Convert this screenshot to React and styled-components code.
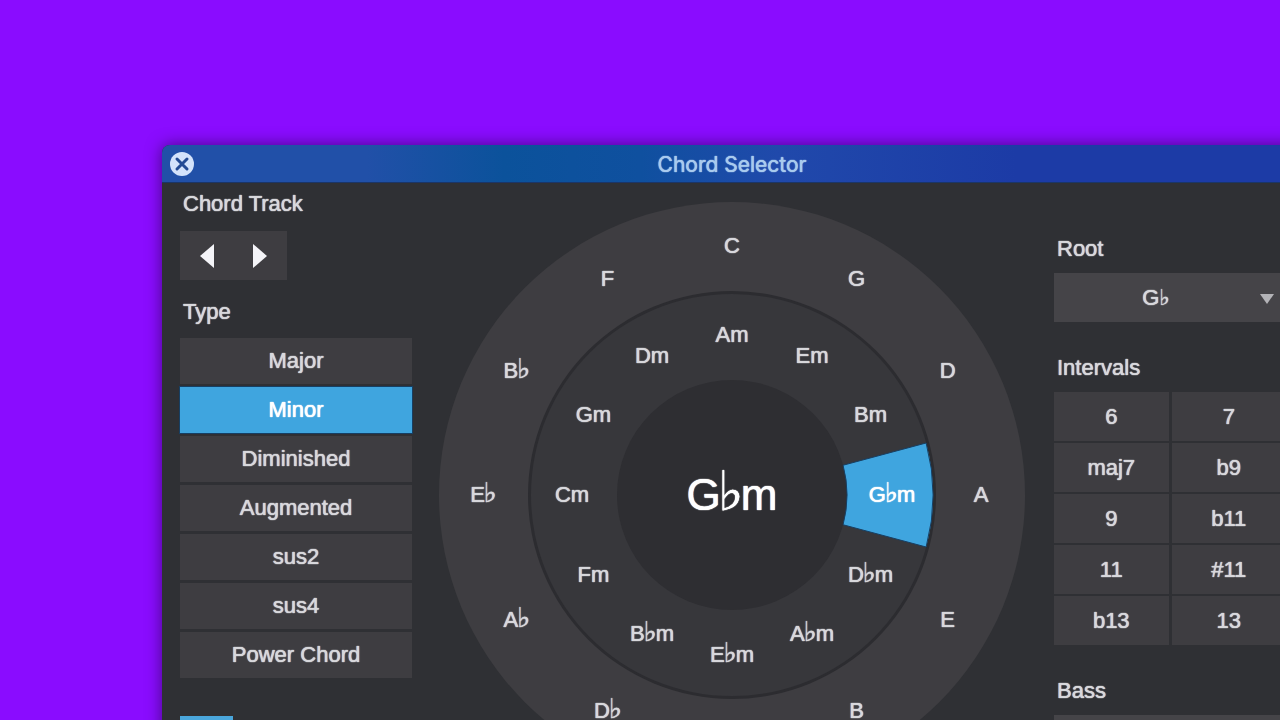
import React, { useState } from 'react';
import styled, { createGlobalStyle } from 'styled-components';

const types = ['Major', 'Minor', 'Diminished', 'Augmented', 'sus2', 'sus4', 'Power Chord'];
const intervals = ['6', '7', 'maj7', 'b9', '9', 'b11', '11', '#11', 'b13', '13'];
const majors = ['C', 'G', 'D', 'A', 'E', 'B', 'G♭', 'D♭', 'A♭', 'E♭', 'B♭', 'F'];
const minors = ['Am', 'Em', 'Bm', 'G♭m', 'D♭m', 'A♭m', 'E♭m', 'B♭m', 'Fm', 'Cm', 'Gm', 'Dm'];
const roots = ['C', 'D♭', 'D', 'E♭', 'E', 'F', 'G♭', 'G', 'A♭', 'A', 'B♭', 'B'];

// wheel radii, in viewBox units
const CENTER = 293;
const OUTER = 293;
const DIVIDER = 204;
const INNER = 201;
const HUB = 115;

const point = (radius, degrees) => {
    const rad = (degrees * Math.PI) / 180;
    return [CENTER + radius * Math.sin(rad), CENTER - radius * Math.cos(rad)];
};

const wedge = (index) => {
    const start = index * 30 - 15;
    const end = index * 30 + 15;
    const a = point(HUB, start);
    const b = point(INNER, start);
    const c = point(INNER, end);
    const d = point(HUB, end);
    return `M${a} L${b} A${INNER} ${INNER} 0 0 1 ${c} L${d} A${HUB} ${HUB} 0 0 0 ${a} Z`;
};

const place = (radius, index) => {
    const [x, y] = point(radius, index * 30);
    return { left: `${(x / CENTER) * 50}%`, top: `${(y / CENTER) * 50}%` };
};

// the flat sign is small in most fonts, so it gets a larger size
const ChordName = ({ name }) => {
    const [note, suffix] = name.split('♭');
    if (suffix === undefined) return note;
    return <>{note}<Flat>♭</Flat>{suffix}</>;
};

const ChordWheel = ({ chord, onSelect }) => {
    const active = minors.indexOf(chord);
    return (
        <Wheel role="group" aria-label="Circle of fifths">
            <svg viewBox="0 0 586 586" aria-hidden="true">
                <circle cx={CENTER} cy={CENTER} r={OUTER} fill="#3e3d41" />
                <circle cx={CENTER} cy={CENTER} r={DIVIDER} fill="#2c2c30" />
                <circle cx={CENTER} cy={CENTER} r={INNER} fill="#37373b" />
                <circle cx={CENTER} cy={CENTER} r={HUB} fill="#2e2e32" />
                {active >= 0 && <path d={wedge(active)} fill="#3fa5df" stroke="#173f63" strokeWidth="1" />}
            </svg>
            {majors.map((name, i) => (
                <WheelButton key={name} style={place(249, i)} onClick={() => onSelect(name)}>
                    <ChordName name={name} />
                </WheelButton>
            ))}
            {minors.map((name, i) => (
                <WheelButton
                    key={name}
                    $active={name === chord}
                    style={place(160, i)}
                    onClick={() => onSelect(name)}
                >
                    <ChordName name={name} />
                </WheelButton>
            ))}
            <Current><ChordName name={chord} /></Current>
        </Wheel>
    );
};

const NoteSelect = ({ id, label, value, onChange }) => (
    <Field>
        <Label as="label" htmlFor={id}>{label}</Label>
        <SelectBox>
            <Select id={id} value={value} onChange={(e) => onChange(e.target.value)}>
                {roots.map((note) => <option key={note}>{note}</option>)}
            </Select>
            <Caret viewBox="0 0 14 10" aria-hidden="true">
                <path d="M0 0H14L7 10Z" fill="#b3b3b7" />
            </Caret>
        </SelectBox>
    </Field>
);

const App = () => {
    const [type, setType] = useState('Minor');
    const [chord, setChord] = useState('G♭m');
    const [root, setRoot] = useState('G♭');
    const [bass, setBass] = useState('G♭');

    return (
        <Page>
            <GlobalStyle />
            <Window>
                <TitleBar>
                    <Close aria-label="Close">
                        <svg viewBox="0 0 24 24" width="24" height="24">
                            <circle cx="12" cy="12" r="12" fill="#d3e2fb" />
                            <path d="M7 7L17 17M17 7L7 17" stroke="#234a94" strokeWidth="3" strokeLinecap="round" />
                        </svg>
                    </Close>
                    <Title>Chord Selector</Title>
                </TitleBar>
                <Body>
                    <LeftPanel>
                        <Label>Chord Track</Label>
                        <TrackNav>
                            <NavButton aria-label="Previous chord">
                                <svg viewBox="0 0 14 24" width="14" height="24">
                                    <path d="M14 0V24L0 12Z" fill="#f4f4f8" />
                                </svg>
                            </NavButton>
                            <NavButton aria-label="Next chord">
                                <svg viewBox="0 0 14 24" width="14" height="24">
                                    <path d="M0 0V24L14 12Z" fill="#f4f4f8" />
                                </svg>
                            </NavButton>
                        </TrackNav>
                        <Label>Type</Label>
                        <TypeList>
                            {types.map((name) => (
                                <TypeButton
                                    key={name}
                                    $active={name === type}
                                    aria-pressed={name === type}
                                    onClick={() => setType(name)}
                                >
                                    {name}
                                </TypeButton>
                            ))}
                        </TypeList>
                        <ModeButton aria-label="Mode" />
                    </LeftPanel>
                    <Middle>
                        <ChordWheel chord={chord} onSelect={setChord} />
                    </Middle>
                    <RightPanel>
                        <NoteSelect id="root" label="Root" value={root} onChange={setRoot} />
                        <Field>
                            <Label>Intervals</Label>
                            <IntervalGrid>
                                {intervals.map((name) => <IntervalButton key={name}>{name}</IntervalButton>)}
                            </IntervalGrid>
                        </Field>
                        <NoteSelect id="bass" label="Bass" value={bass} onChange={setBass} />
                    </RightPanel>
                </Body>
            </Window>
        </Page>
    );
};

export default App;

const GlobalStyle = createGlobalStyle`
    * {
        box-sizing: border-box;
    }
    body {
        margin: 0;
        background: #8a0cff;
    }
    body, button, select {
        font-family: "Liberation Sans", "DejaVu Sans", sans-serif;
        font-size: 22px;
        line-height: 28px;
        color: #d8d8dc;
        text-shadow: 0 0 1px currentColor, 0 0 1px currentColor;
    }
    button {
        border: 0;
        padding: 0;
        cursor: pointer;
    }
`
const Page = styled.div`
    height: 100vh;
    overflow: hidden;
    padding: 145px 0 0 162px;
`
/* the window runs off the right and bottom edges of the page */
const Window = styled.main`
    margin-right: -22px;
    border-radius: 8px 8px 0 0;
    background: #2f3034;
    box-shadow: 0 0 16px rgba(0, 0, 0, 0.5);
`
const TitleBar = styled.header`
    display: grid;
    grid-template-columns: 24px 1fr 24px;
    align-items: center;
    height: 38px;
    padding: 0 8px;
    border-radius: 8px 8px 0 0;
    background: linear-gradient(90deg, #2150a8 0%, #2150a8 18%, #0b529b 30%, #0f509f 42%, #2049ab 54%, #1c3ba6 75%, #1c3ba6 100%);
    border-bottom: 1px solid #1b3567;
`
const Close = styled.button`
    display: flex;
    background: none;
`
const Title = styled.h1`
    margin: 0;
    padding-top: 3px;
    font-family: Inter, sans-serif;
    font-size: 21px;
    font-weight: 400;
    text-align: center;
    color: #a9cbee;
`
const Body = styled.div`
    display: grid;
    grid-template-columns: 232px 1fr 232px;
    padding: 0 16px 0 18px;
`
const LeftPanel = styled.section`
    display: flex;
    flex-direction: column;
    padding-top: 7px;
`
const RightPanel = styled.section`
    display: flex;
    flex-direction: column;
    gap: 32px;
    padding-top: 52px;
`
const Middle = styled.section`
    padding: 19px 29px 0 27px;
`
const Label = styled.div`
    padding-left: 3px;
`
const Field = styled.div`
    display: flex;
    flex-direction: column;
    gap: 10px;
`
const TrackNav = styled.div`
    display: flex;
    width: 107px;
    margin: 13px 0 18px;
    background: #3e3d41;
`
const NavButton = styled.button`
    display: flex;
    flex: 1;
    align-items: center;
    justify-content: center;
    height: 49px;
    background: none;
`
const TypeList = styled.div`
    display: grid;
    gap: 3px;
    margin: 12px 0 38px;
`
const TypeButton = styled.button`
    height: 46px;
    background: ${({ $active }) => ($active ? '#3fa5df' : '#3e3d41')};
    color: ${({ $active }) => ($active ? '#fff' : '#d8d8dc')};
    box-shadow: ${({ $active }) => ($active ? '0 0 0 1px #173f63' : 'none')};
`
const ModeButton = styled.button`
    width: 53px;
    height: 46px;
    background: #4aa6dc;
`
const Wheel = styled.div`
    position: relative;
    aspect-ratio: 1;

    svg {
        display: block;
        width: 100%;
    }
`
const WheelButton = styled.button`
    position: absolute;
    transform: translate(-50%, -50%);
    background: none;
    white-space: nowrap;
    color: ${({ $active }) => ($active ? '#fff' : '#d8d8dc')};
`
const Flat = styled.span`
    margin: 0 -1px;
    font-family: "DejaVu Sans", sans-serif;
    font-size: 125%;
    line-height: 0;
`
const Current = styled.output`
    position: absolute;
    top: 50%;
    left: 50%;
    transform: translate(-50%, -50%);
    font-size: 44px;
    line-height: 52px;
    color: #fff;

    ${Flat} {
        margin: 0 -3px;
    }
`
const SelectBox = styled.div`
    position: relative;
`
const Select = styled.select`
    display: block;
    appearance: none;
    width: 100%;
    height: 49px;
    padding: 0 28px 0 0;
    border: 0;
    border-radius: 0;
    background: #454448;
    text-align: center;
    text-align-last: center;
`
const Caret = styled.svg`
    position: absolute;
    top: 21px;
    right: 12px;
    width: 14px;
    height: 10px;
    pointer-events: none;
`
const IntervalGrid = styled.div`
    display: grid;
    grid-template-columns: 1fr 1fr;
    gap: 2px 3px;
`
const IntervalButton = styled.button`
    height: 49px;
    background: #3e3d41;
`
